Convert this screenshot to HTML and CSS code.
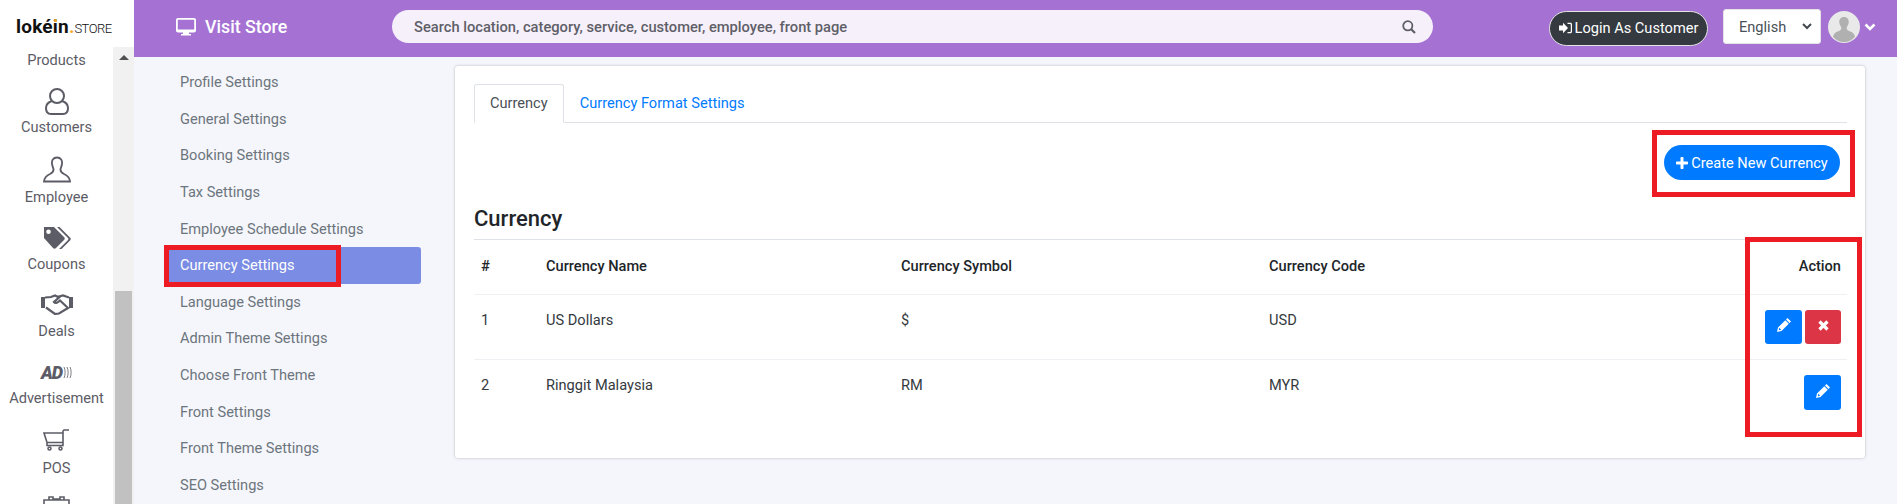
FILE: index.html
```html
<!DOCTYPE html>
<html lang="en">
  <head>
    <meta charset="UTF-8" />
    <meta name="viewport" content="width=device-width, initial-scale=1.0" />
    <title>Currency Settings</title>
    <link rel="stylesheet" href="styles.css">
  </head>
  <body>
    <div class="app">
      <aside class="sidebar">
        <div class="logo"><b>loké<em class="logo-i">i</em>n</b><i>.</i><span>STORE</span></div>
        <div class="sidebar-body">
          <nav class="menu">
            <a class="menu-item first"><small>Products</small></a>
            <a class="menu-item item-customers">
              <svg width="24" height="27" viewBox="0 0 24 27" fill="none" stroke="#5c5c66" stroke-width="2">
                <circle cx="12" cy="8" r="7" />
                <path d="M7 13C2.500 14.500 1 17 1 20C1 24 3 26 6 26H18C21 26 23 24 23 20C23 17 21.500 14.500 17 13" />
              </svg>
              <small>Customers</small>
            </a>
            <a class="menu-item item-employee">
              <svg width="28" height="27" viewBox="0 0 28 27" fill="none" stroke="#5c5c66" stroke-width="1.800">
                <path d="M14 1.500C10 1.500 8.500 4.500 9 8C9.300 10 10 11.500 10.500 13C10.800 15 10 16.500 7 18C3.500 19.500 1.500 21 1 25.500H27C26.500 21 24.500 19.500 21 18C18 16.500 17.200 15 17.500 13C18 11.500 18.700 10 19 8C19.500 4.500 18 1.500 14 1.500Z" />
              </svg>
              <small>Employee</small>
            </a>
            <a class="menu-item item-coupons">
              <svg width="28" height="24" viewBox="0 0 28 24" fill="#5c5c66">
                <path d="M1 1H11L21 11C22 12 22 13 21 14L13 22C12 23 11 23 10 22L1 12ZM5.500 3.500A2.300 2.300 0 1 0 5.500 8.100A2.300 2.300 0 1 0 5.500 3.500Z" fill-rule="evenodd" />
                <path d="M14 1H16.500L27 11.500C28 12.500 28 13.500 27 14.500L18.500 23H16L25 14C25.500 13.500 25.500 12.500 25 12Z" />
              </svg>
              <small>Coupons</small>
            </a>
            <a class="menu-item item-deals">
              <svg width="34" height="21" viewBox="0 0 34 21" fill="none" stroke="#5c5c66" stroke-width="2.200">
                <path d="M5 3.500L11 3L15 1.500L19 3.500L14 8C15.500 10 18 8.500 20 6.500L28 14L19 19.500L15 20L6 13.500" />
                <path d="M17 3L23 1.500L29 3.500" />
                <path d="M1 3H5V14H1ZM29 3H33V14H29Z" fill="#5c5c66" stroke="none" />
              </svg>
              <small>Deals</small>
            </a>
            <a class="menu-item item-ad">
              <span class="ad-icon"><b>AD</b>
                <svg width="9" height="13" viewBox="0 0 9 13" fill="none" stroke="#5c5c66" stroke-width="0.800">
                  <path d="M1 1C2.500 4 2.500 9 1 12M4 1C5.500 4 5.500 9 4 12M7 1C8.500 4 8.500 9 7 12" />
                </svg>
              </span>
              <small>Advertisement</small>
            </a>
            <a class="menu-item item-pos">
              <svg width="27" height="22" viewBox="0 0 27 22" fill="none" stroke="#5c5c66" stroke-width="1.600">
                <path d="M1 4H20V13.500H4L1 4ZM4 14V16.500H20V2L21 1H26" />
                <circle cx="6.500" cy="19.500" r="1.500" />
                <circle cx="17.500" cy="19.500" r="1.500" />
              </svg>
              <small>POS</small>
            </a>
            <a class="menu-item item-next">
              <svg width="27" height="20" viewBox="0 0 27 20" fill="none" stroke="#5c5c66" stroke-width="1.600">
                <path d="M1 4H26V20H1ZM6 4V1H10V4M17 4V1H21V4M10 3H17" />
              </svg>
            </a>
          </nav>
          <div class="scrollbar">
            <span class="scroll-up"></span>
            <span class="scroll-thumb"></span>
          </div>
        </div>
      </aside>

      <div class="main">
        <header class="topbar">
          <a class="visit">
            <svg width="20" height="18" viewBox="0 0 20 18" fill="#fff">
              <path d="M2 0H18C19.100 0 20 .9 20 2V12.500C20 13.600 19.100 14.500 18 14.500H13V16H15V17.500H5V16H7V14.500H2C.9 14.500 0 13.600 0 12.500V2C0 .9 .9 0 2 0ZM1.800 1.800V11.500H18.200V1.800Z" fill-rule="evenodd" />
            </svg>
            Visit Store
          </a>
          <div class="search">
            <span>Search location, category, service, customer, employee, front page</span>
            <svg width="14" height="14" viewBox="0 0 14 14" fill="none" stroke="#5f5f68" stroke-width="1.800">
              <circle cx="5.800" cy="5.800" r="4.600" />
              <path d="M9.200 9.200L13 13" stroke-width="2.200" />
            </svg>
          </div>
          <a class="login">
            <svg width="13" height="12" viewBox="0 0 13 12" fill="#fff">
              <path d="M0 3.500H4V.8L9 6L4 11.200V8.500H0Z" />
              <path d="M8.500 .8H11.500C12.300 .8 13 1.500 13 2.300V9.700C13 10.500 12.300 11.200 11.500 11.200H8.500V10H11C11.500 10 11.800 9.700 11.800 9.200V2.800C11.800 2.300 11.500 2 11 2H8.500Z" />
            </svg>
            Login As Customer
          </a>
          <div class="lang">
            <span>English</span>
            <svg width="10" height="7" viewBox="0 0 10 7" fill="none" stroke="#454a50" stroke-width="2">
              <path d="M1 1L5 5L9 1" />
            </svg>
          </div>
          <span class="avatar">
            <svg width="32" height="32" viewBox="0 0 32 32">
              <circle cx="16" cy="16" r="16" fill="#e9e9e9" />
              <path d="M16 6C12.500 6 11 8.500 11.300 11.500C11.500 13.500 12.500 15 13.300 16.500C13.500 18 13 19 11 20C8 21 6 22 5 25.500C8 29.500 12 31 16 31C20 31 24 29.500 27 25.500C26 22 24 21 21 20C19 19 18.500 18 18.700 16.500C19.500 15 20.500 13.500 20.700 11.500C21 8.500 19.500 6 16 6Z" fill="#b0b0b0" />
            </svg>
          </span>
          <svg class="avatar-caret" width="12" height="8" viewBox="0 0 12 8" fill="none" stroke="#fff" stroke-width="2.600">
            <path d="M1.500 1.500L6 6L10.500 1.500" />
          </svg>
        </header>

        <div class="content">
          <nav class="submenu">
            <a>Profile Settings</a>
            <a>General Settings</a>
            <a>Booking Settings</a>
            <a>Tax Settings</a>
            <a>Employee Schedule Settings</a>
            <a class="active">Currency Settings</a>
            <a>Language Settings</a>
            <a>Admin Theme Settings</a>
            <a>Choose Front Theme</a>
            <a>Front Settings</a>
            <a>Front Theme Settings</a>
            <a>SEO Settings</a>
          </nav>

          <section class="card">
            <div class="tabs">
              <a class="tab active">Currency</a>
              <a class="tab">Currency Format Settings</a>
            </div>
            <div class="toolbar">
              <a class="btn-create">
                <svg width="12" height="12" viewBox="0 0 12 12" fill="#fff">
                  <path d="M4.500 1C4.500 .4 4.900 0 5.500 0H6.500C7.100 0 7.500 .4 7.500 1V4.500H11C11.600 4.500 12 4.900 12 5.500V6.500C12 7.100 11.600 7.500 11 7.500H7.500V11C7.500 11.600 7.100 12 6.500 12H5.500C4.900 12 4.500 11.600 4.500 11V7.500H1C.4 7.500 0 7.100 0 6.500V5.500C0 4.900 .4 4.500 1 4.500H4.500Z" />
                </svg>
                Create New Currency
              </a>
            </div>
            <h3 class="title">Currency</h3>
            <table class="table">
              <colgroup>
                <col class="col-num" />
                <col class="col-name" />
                <col class="col-symbol" />
                <col />
                <col class="col-action" />
              </colgroup>
              <thead>
                <tr>
                  <th>#</th>
                  <th>Currency Name</th>
                  <th>Currency Symbol</th>
                  <th>Currency Code</th>
                  <th class="right">Action</th>
                </tr>
              </thead>
              <tbody>
                <tr>
                  <td>1</td>
                  <td>US Dollars</td>
                  <td>$</td>
                  <td>USD</td>
                  <td class="right">
                    <div class="actions">
                      <a class="btn-icon blue">
                        <svg width="14" height="14" viewBox="0 0 14 14" fill="#fff"><path d="M10.500 0L14 3.500L12.500 5L9 1.500ZM8.300 2.200L11.800 5.700L4.500 13L0 14L1 9.500ZM2.300 9.800L1.800 12.200L4.200 11.700Z" fill-rule="evenodd" /></svg>
                      </a>
                      <a class="btn-icon red">
                        <svg width="11" height="11" viewBox="0 0 11 11" fill="none" stroke="#fff" stroke-width="3.200"><path d="M1.500 1.500L9.500 9.500M9.500 1.500L1.500 9.500" /></svg>
                      </a>
                    </div>
                  </td>
                </tr>
                <tr>
                  <td>2</td>
                  <td>Ringgit Malaysia</td>
                  <td>RM</td>
                  <td>MYR</td>
                  <td class="right">
                    <div class="actions">
                      <a class="btn-icon blue wide">
                        <svg width="14" height="14" viewBox="0 0 14 14" fill="#fff"><path d="M10.500 0L14 3.500L12.500 5L9 1.500ZM8.300 2.200L11.800 5.700L4.500 13L0 14L1 9.500ZM2.300 9.800L1.800 12.200L4.200 11.700Z" fill-rule="evenodd" /></svg>
                      </a>
                    </div>
                  </td>
                </tr>
              </tbody>
            </table>
          </section>
        </div>
      </div>
    </div>

    <span class="mark mark-menu"></span>
    <span class="mark mark-create"></span>
    <span class="mark mark-action"></span>
  </body>
</html>
```

FILE: styles.css
```css
* {
  box-sizing: border-box;
}

html,
body {
  height: 504px;
  margin: 0;
  overflow: hidden;
}

body {
  position: relative;
  font-family: Roboto, sans-serif;
  font-size: 14.6px;
  color: #212529;
  background: #f5f6fb;
}

.app {
  display: flex;
  height: 504px;
}

/* left rail */
.sidebar {
  display: flex;
  flex-direction: column;
  width: 134px;
  flex: none;
  background: #fff;
}

.logo {
  display: flex;
  align-items: baseline;
  height: 47px;
  padding: 15px 0 0 16px;
  color: #111;
}

.logo b {
  font-size: 19px;
  font-weight: 700;
  letter-spacing: 0.2px;
}

.logo-i {
  position: relative;
  font-style: normal;
}

.logo-i::after {
  content: "";
  position: absolute;
  top: 4px;
  left: 1px;
  width: 3px;
  height: 3px;
  border-radius: 50%;
  background: #f5a623;
}

.logo i {
  font-size: 19px;
  font-style: normal;
  font-weight: 700;
  color: #f5a623;
}

.logo span {
  font-size: 13px;
  font-weight: 300;
  letter-spacing: -0.5px;
}

.sidebar-body {
  display: flex;
  flex: 1;
  min-height: 0;
}

.menu {
  flex: 1;
  min-width: 0;
  overflow: hidden;
}

.menu-item {
  display: flex;
  flex-direction: column;
  align-items: center;
  height: 68px;
  color: #5c5c66;
}

.menu-item small {
  font-size: 14.6px;
  line-height: 20px;
}

.menu-item.first {
  height: 23px;
  padding-top: 3px;
}

.item-customers {
  padding-top: 18px;
  height: 70px;
}

.item-customers small {
  margin-top: 2px;
}

.item-employee {
  height: 69px;
  padding-top: 16px;
}

.item-employee small {
  margin-top: 4px;
}

.item-coupons {
  height: 67px;
  padding-top: 17px;
}

.item-coupons small {
  margin-top: 4px;
}

.item-deals {
  height: 70px;
  padding-top: 18px;
}

.item-deals small {
  margin-top: 6px;
}

.item-ad {
  height: 68px;
  padding-top: 20px;
}

.item-ad small {
  margin-top: 9px;
}

.item-pos {
  height: 69px;
  padding-top: 15px;
}

.item-pos small {
  margin-top: 7px;
}

.item-next {
  padding-top: 13px;
}

.ad-icon {
  display: flex;
  align-items: center;
  height: 13px;
  gap: 1px;
}

.ad-icon b {
  font-size: 18px;
  font-style: italic;
  font-weight: 900;
  line-height: 13px;
  letter-spacing: -1px;
}

.scrollbar {
  position: relative;
  width: 21px;
  flex: none;
  background: #f1f1f1;
}

.scroll-up {
  display: block;
  width: 0;
  margin: 8px auto 0;
  border: 5px solid transparent;
  border-top: 0;
  border-bottom-color: #505050;
}

.scroll-thumb {
  position: absolute;
  top: 244px;
  bottom: 0;
  left: 2px;
  width: 17px;
  background: #c1c1c1;
}

/* top bar */
.main {
  display: flex;
  flex-direction: column;
  flex: 1;
  min-width: 0;
}

.topbar {
  display: flex;
  align-items: center;
  height: 57px;
  flex: none;
  padding: 0 21px 0 42px;
  background: #a572d4;
}

.visit {
  display: flex;
  align-items: center;
  gap: 9px;
  width: 216px;
  flex: none;
  margin-top: -4px;
  font-size: 17.8px;
  font-weight: 500;
  color: #fff;
}

.search {
  display: flex;
  align-items: center;
  justify-content: space-between;
  width: 1041px;
  height: 33px;
  flex: none;
  margin-top: -4px;
  padding: 0 17px 0 22px;
  border-radius: 17px;
  background: #f6f0fb;
  font-size: 14.7px;
  font-weight: 500;
  color: #5f5f68;
}

.login {
  display: flex;
  align-items: center;
  justify-content: center;
  gap: 3px;
  width: 159px;
  height: 35px;
  flex: none;
  margin: -1px 0 0 116px;
  border: 1px solid #e4e4e4;
  border-radius: 18px;
  background: #343a40;
  color: #fff;
}

.lang {
  display: flex;
  align-items: center;
  justify-content: space-between;
  width: 98px;
  height: 35px;
  flex: none;
  margin: -4px 0 0 15px;
  padding: 0 8px 0 15px;
  border: 1px solid #e4e4e4;
  border-radius: 3px;
  background: #fff;
  color: #495057;
}

.avatar {
  display: block;
  width: 32px;
  height: 32px;
  flex: none;
  margin: -4px 0 0 7px;
}

.avatar-caret {
  flex: none;
  margin: -4px 0 0 4px;
}

/* settings list */
.content {
  display: flex;
  flex: 1;
  min-height: 0;
}

.submenu {
  display: flex;
  flex-direction: column;
  width: 256px;
  flex: none;
  margin: 7px 34px 0 31px;
}

.submenu a {
  display: flex;
  align-items: center;
  height: 36.6px;
  flex: none;
  padding-left: 15px;
  border-radius: 3px;
  color: #6c757d;
}

.submenu a.active {
  background: #7a8ce3;
  color: #fff;
}

/* card */
.card {
  width: 1410px;
  height: 392px;
  flex: none;
  margin-top: 9px;
  padding: 18px 18px 0 19px;
  border-radius: 3px;
  background: #fff;
  box-shadow: 0 0 3px rgba(0, 0, 0, 0.25);
}

.tabs {
  display: flex;
  height: 39px;
  border-bottom: 1px solid #dee2e6;
}

.tab {
  height: 39px;
  padding: 9px 15px 0;
  border: 1px solid transparent;
  color: #007bff;
}

.tab.active {
  border-color: #dee2e6 #dee2e6 #fff;
  border-radius: 3px 3px 0 0;
  color: #495057;
}

.toolbar {
  display: flex;
  justify-content: flex-end;
  height: 78px;
  padding: 22px 7px 0 0;
}

.btn-create {
  display: flex;
  align-items: center;
  justify-content: center;
  gap: 3px;
  width: 176px;
  height: 35px;
  border-radius: 18px;
  background: #007bff;
  color: #fff;
}

.title {
  height: 39px;
  margin: 0;
  font-size: 22px;
  font-weight: 500;
  line-height: 36px;
  border-bottom: 1px solid #dee2e6;
}

.table {
  width: 100%;
  border-collapse: collapse;
  table-layout: fixed;
}

.col-num {
  width: 65px;
}

.col-name {
  width: 355px;
}

.col-symbol {
  width: 368px;
}

.col-action {
  width: 200px;
}

.table th,
.table td {
  padding: 0 6px 0 7px;
  text-align: left;
  border-bottom: 1px solid #eef0f3;
}

.table th {
  height: 54px;
  padding-bottom: 1px;
  font-weight: 500;
}

.table td {
  height: 65px;
  padding-bottom: 14px;
  color: #343a40;
}

.table td.right {
  padding: 15px 6px 0 7px;
  vertical-align: top;
}

.table tr:last-child td {
  border-bottom: 0;
}

.table th.right {
  text-align: right;
}

.actions {
  display: flex;
  justify-content: flex-end;
  gap: 3px;
}

.btn-icon {
  display: flex;
  align-items: center;
  justify-content: center;
  width: 37px;
  height: 34px;
  border-radius: 3px;
}

.btn-icon.wide {
  height: 35px;
}

.btn-icon svg {
  margin-top: -3px;
}

.blue {
  background: #007bff;
}

.red {
  width: 36px;
  background: #dc3545;
}

/* red annotation boxes on top of the screenshot */
.mark {
  position: absolute;
  border: 5px solid #ed1c24;
}

.mark-menu {
  top: 245px;
  left: 164px;
  width: 177px;
  height: 42px;
}

.mark-create {
  top: 130px;
  left: 1652px;
  width: 203px;
  height: 67px;
}

.mark-action {
  top: 237px;
  left: 1745px;
  width: 117px;
  height: 200px;
}
```
